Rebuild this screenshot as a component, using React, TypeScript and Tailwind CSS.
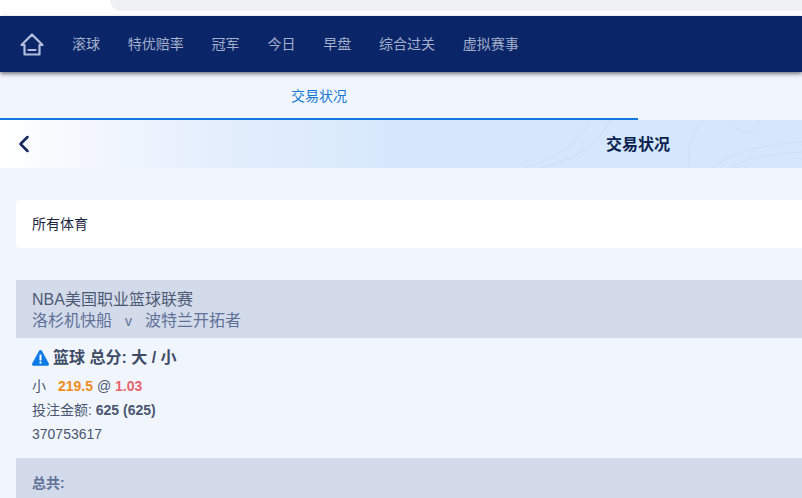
import { ChevronLeft } from "lucide-react";

const navItems = ["滚球", "特优赔率", "冠军", "今日", "早盘", "综合过关", "虚拟赛事"];

function HomeIcon() {
  return (
    <svg width="24" height="23" viewBox="0 0 24 23" fill="none" stroke="#b3bfdc" strokeWidth="2.2" strokeLinejoin="round" strokeLinecap="round">
      <path d="M1.500 12 12 1.500 22.500 12h-3v9.500h-15V12z" />
      <path d="M8.500 17h7" />
    </svg>
  );
}

function WarnIcon() {
  return (
    <svg width="17" height="16" viewBox="0 0 17 16">
      <path d="M8.500 0c.6 0 1.100.300 1.400.800l6.900 12.700c.5 1-.2 2.200-1.400 2.200H1.600C.4 15.700-.3 14.500.2 13.500L7.100.8C7.400.3 7.900 0 8.500 0z" fill="#0d7be6" />
      <rect x="7.500" y="4.500" width="2" height="6" rx="0.500" fill="#fff" />
      <rect x="7.500" y="11.500" width="2" height="2" rx="0.500" fill="#fff" />
    </svg>
  );
}

// faint contour lines behind the page title
function HeaderWaves() {
  return (
    <svg className="absolute inset-0 h-full w-full" viewBox="0 0 802 48" fill="none" stroke="#bfd8ef" strokeOpacity="0.45" strokeWidth="1">
      <path d="M523 48c36-10 58-28 67-48" />
      <path d="M540 48c36-8 60-26 70-48" />
      <path d="M690 48c-4-18 2-34 12-48" />
      <path d="M730 0c6 10 14 14 22 12 4-2 6-6 8-12" />
      <path d="M712 48c18-14 50-24 90-26" />
      <path d="M730 48c18-10 38-14 72-16" />
    </svg>
  );
}

export default function App() {
  return (
    <div className="h-[498px] w-[802px] overflow-hidden bg-[#f1f6fe] font-['Liberation_Sans','Noto_Sans_CJK_SC',sans-serif]">
      {/* browser chrome remnant */}
      <div className="h-[16px] bg-white pl-[110px]">
        <div className="h-[11px] rounded-bl-[14px] bg-[#f0f1f3]" />
      </div>

      <nav className="relative z-10 flex h-[56px] items-center bg-[#0b2668] pl-[20px] shadow-[0_2px_4px_rgba(0,0,0,0.5)]">
        <HomeIcon />
        <div className="ml-[28px] flex gap-[27.8px] text-[14px] text-[#a3afcb]">
          {navItems.map((item) => (
            <span key={item}>{item}</span>
          ))}
        </div>
      </nav>

      <div className="h-[48px]">
        <div className="flex h-[48px] w-[638px] items-center justify-center border-b-2 border-[#1478e0] pt-[2px] text-[14px] text-[#1478d2]">
          交易状况
        </div>
      </div>

      <div className="relative flex h-[48px] w-full items-center bg-gradient-to-r from-white via-[#e6effd] via-25% to-[#d5e8fb] to-50% pl-[10px]">
        <HeaderWaves />
        <ChevronLeft size={28} strokeWidth={2.2} className="relative text-[#14285a]" />
        <div className="relative ml-[568px] pt-[2px] text-[16px] font-bold text-[#0b2150]">交易状况</div>
      </div>

      <div className="ml-[16px] mt-[32px] flex h-[48px] w-[820px] items-center rounded-[4px] bg-white pl-[16px] text-[14px] text-[#1c2540]">
        所有体育
      </div>

      <div className="ml-[16px] mt-[32px] w-[820px]">
        <div className="h-[58px] bg-[#d3daea] pl-[16px] pt-[9px] text-[16px] leading-[21px]">
          <div className="text-[#4d5a75]">NBA美国职业篮球联赛</div>
          <div className="text-[#5f7199]">
            洛杉机快船<span className="mx-[13px] text-[14px]">v</span>波特兰开拓者
          </div>
        </div>
        <div className="h-[120px] pl-[16px] pt-[9px]">
          <div className="flex h-[22px] items-center gap-[4px] text-[16px] font-bold text-[#3f4c66]">
            <WarnIcon />
            <span>篮球 总分: 大 / 小</span>
          </div>
          <div className="mt-[5px] h-[24px] text-[14px] leading-[24px] text-[#4a5670]">
            小
            <span className="ml-[12px] font-bold text-[#f08c1e]">219.5</span> @{" "}
            <span className="font-bold text-[#e8636b]">1.03</span>
          </div>
          <div className="h-[24px] text-[14px] leading-[24px] text-[#4a5670]">
            投注金额: <span className="font-bold">625 (625)</span>
          </div>
          <div className="h-[24px] text-[14px] leading-[24px] text-[#4a5670]">370753617</div>
        </div>
        <div className="h-[40px] bg-[#d3daea] pl-[16px] pt-[16px] text-[14px] font-bold leading-[18px] text-[#5f7199]">总共:</div>
      </div>
    </div>
  );
}
